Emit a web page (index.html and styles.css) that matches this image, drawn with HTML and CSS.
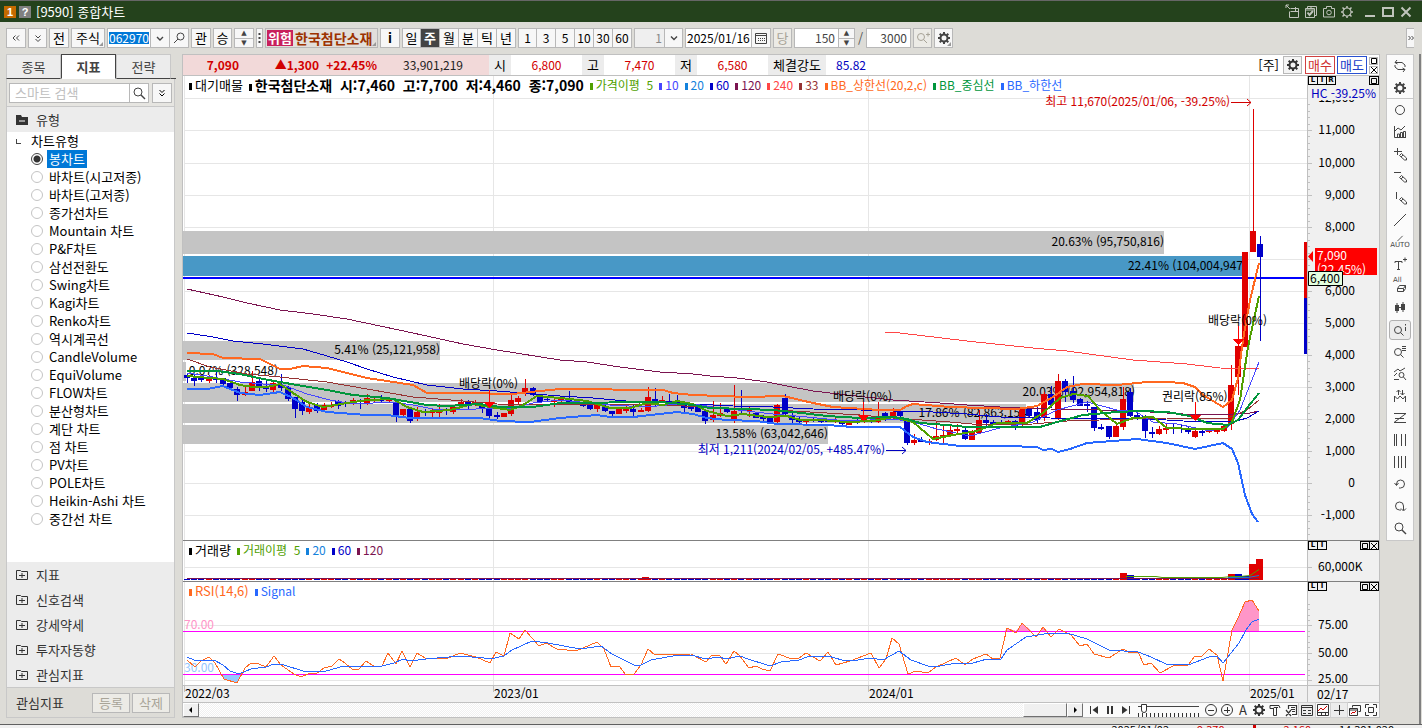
FILE: index.html
```html
<!DOCTYPE html>
<html lang="ko">
<head>
    <meta charset="UTF-8">
    <title>[9590] 종합차트</title>
    <link rel="stylesheet" href="styles.css">
</head>
<body>
<svg class="defs" aria-hidden="true">
    <symbol id="gear" viewBox="0 0 16 16">
        <circle cx="8" cy="8" r="3.5" fill="none" stroke="currentColor" stroke-width="2"/>
        <path d="M8 2v2M8 12v2M2 8h2M12 8h2M3.700 3.700l1.500 1.500M10.800 10.800l1.500 1.500M12.300 3.700l-1.500 1.500M5.200 10.800l-1.500 1.500" stroke="currentColor" stroke-width="2"/>
    </symbol>
    <symbol id="lens" viewBox="0 0 16 16">
        <circle cx="7" cy="7" r="4" fill="none" stroke="currentColor"/>
        <path d="M10 10l4 4" stroke="currentColor" stroke-width="1.4"/>
    </symbol>
    <symbol id="plusbox" viewBox="0 0 12 12">
        <path d="M.5 1.500h4l1 1h6v8H.5zM3 6.500h6M6 4v5" fill="none" stroke="currentColor"/>
    </symbol>
    <symbol id="pen" viewBox="0 0 16 16">
        <path d="M7.500 9.500l2-2 5 4.500v2h-2zM9 11l2-2" fill="none" stroke="currentColor"/>
    </symbol>
    <symbol id="square" viewBox="0 0 8 8">
        <path d="M1.500 1.500h5v5h-5z" fill="none" stroke="currentColor"/>
    </symbol>
    <symbol id="cross" viewBox="0 0 8 8">
        <path d="M1 1l6 6M7 1L1 7" stroke="currentColor"/>
    </symbol>
</svg>
<div class="app">
    <header class="titlebar">
        <span class="num">1</span>
        <span class="help">?</span>
        <h1>[9590] 종합차트</h1>
        <div class="win-tools">
            <button aria-label="분리"><svg viewBox="0 0 16 16"><path d="M5.500 4.500h8v9h-9v-6M5.500 7.500h8M10.500 3v4M1 4V1h3M1 1l4 4" fill="none" stroke="currentColor"/></svg></button>
            <button aria-label="복사"><svg viewBox="0 0 16 16"><path d="M4.500 4V2.500h9v9H12M2.500 4.500h9v9h-9zM8 2.500v2M2 6h10" fill="none" stroke="currentColor"/><path d="M4.500 8.500l2 2.500 3.500-4" fill="none" stroke="currentColor" stroke-width="2"/></svg></button>
            <button aria-label="캡처"><svg viewBox="0 0 16 16"><path d="M2.500 4.500h3v-2h5v2h3v8.500h-11z" fill="none" stroke="currentColor"/><circle cx="8" cy="8.500" r="2.300" fill="none" stroke="currentColor"/></svg></button>
            <button aria-label="설정"><svg viewBox="0 0 16 16"><circle cx="8" cy="8" r="4" fill="none" stroke="currentColor" stroke-width="1.200"/><path d="M8 2v2M8 12v2M2 8h2M12 8h2M3.500 3.500l2 2M10.500 10.500l2 2M12.500 3.500l-2 2M5.500 10.500l-2 2" stroke="currentColor" stroke-width="1.500"/></svg></button>
            <button aria-label="최소화" class="big"><svg viewBox="0 0 16 16"><path d="M3 12h10" stroke="currentColor" stroke-width="2"/></svg></button>
            <button aria-label="최대화"><svg viewBox="0 0 16 16"><path d="M3 4h10v8H3z" fill="none" stroke="currentColor" stroke-width="2"/></svg></button>
            <button aria-label="닫기"><svg viewBox="0 0 16 16"><path d="M3.500 3.500l9 9M12.500 3.500l-9 9" stroke="currentColor" stroke-width="2"/></svg></button>
        </div>
    </header>

    <div class="toolbar">
        <button class="btn w20" aria-label="접기"><svg viewBox="0 0 16 16"><path d="M7.500 5.500L5 8l2.500 2.500M11 5.500L8.500 8l2.500 2.500" fill="none" stroke="currentColor"/></svg></button>
        <button class="btn w19" aria-label="펼치기"><svg viewBox="0 0 16 16"><path d="M5.500 5.500L8 8l2.500-2.500M5.500 9L8 11.500 10.500 9" fill="none" stroke="currentColor"/></svg></button>
        <button class="btn w20">전</button>
        <button class="btn w34 corner">주식</button>
        <div class="field code">
            <input type="text" value="062970" aria-label="종목코드">
            <button aria-label="목록"><svg viewBox="0 0 16 16"><path d="M5 7l3 3 3-3" fill="none" stroke="currentColor" stroke-width="1.400"/></svg></button>
            <button aria-label="검색"><svg viewBox="0 0 16 16"><circle cx="9.500" cy="6.500" r="3.500" fill="none" stroke="currentColor"/><path d="M7 9l-4 4" stroke="currentColor"/></svg></button>
        </div>
        <button class="btn w20">관</button>
        <button class="btn w19">승</button>
        <div class="spin w20"><button aria-label="위">▲</button><button aria-label="아래">▼</button></div>
        <button class="btn dots" aria-label="더보기"><svg viewBox="0 0 7 16"><path d="M2.500 3h2v2h-2zM2.500 7h2v2h-2zM2.500 11h2v2h-2z" fill="currentColor"/></svg></button>
        <button class="btn stock corner"><b>위험</b><strong>한국첨단소재</strong></button>
        <button class="btn w20 bold">i</button>
        <div class="group">
            <button>일</button><button class="on">주</button><button>월</button><button>분</button><button>틱</button><button>년</button>
        </div>
        <div class="group mins">
            <button>1</button><button>3</button><button>5</button><button>10</button><button>30</button><button>60</button>
        </div>
        <div class="unit">
            <select aria-label="주기" disabled><option>1</option></select>
            <svg viewBox="0 0 16 16"><path d="M5 6.500l3 3 3-3" fill="none" stroke="currentColor" stroke-width="1.400"/></svg>
        </div>
        <div class="field date">
            <input type="text" value="2025/01/16" aria-label="날짜">
            <button aria-label="달력"><svg viewBox="0 0 16 16"><path d="M2.500 3.500h11v10h-11zM2.500 5.500h11" fill="none" stroke="currentColor"/><path d="M5 8.500h7M5 10.500h7" stroke="currentColor" stroke-dasharray="1 1"/></svg></button>
        </div>
        <button class="btn w19 off" disabled>당</button>
        <div class="field count">
            <input type="text" value="150" aria-label="봉 개수">
            <div class="spin"><button aria-label="증가">▲</button><button aria-label="감소">▼</button></div>
        </div>
        <span class="slash">/</span>
        <div class="field total"><input type="text" value="3000" aria-label="전체 개수"></div>
        <button class="btn w19 off" disabled aria-label="확대"><svg viewBox="0 0 16 16"><circle cx="6" cy="7" r="3.500" fill="none" stroke="currentColor"/><path d="M8.500 9.500l3.500 3.500M11 4.500h4M13 2.500v4" stroke="currentColor"/></svg></button>
        <button class="btn w19 corner" aria-label="설정"><svg><use href="#gear"/></svg></button>
        <button class="btn more" aria-label="더보기"><svg viewBox="0 0 8 16"><path d="M1.500 6L3.500 8l-2 2M4.500 6l2 2-2 2" fill="none" stroke="currentColor"/></svg></button>
    </div>

    <div class="work">
        <aside class="side">
            <nav class="tabs">
                <button>종목</button><button class="on">지표</button><button>전략</button>
            </nav>
            <div class="panel">
                <div class="search">
                    <div class="box">
                        <input type="text" placeholder="스마트 검색" aria-label="스마트 검색">
                        <button aria-label="찾기"><svg><use href="#lens"/></svg></button>
                    </div>
                    <button class="fold" aria-label="펼치기"><svg viewBox="0 0 16 16"><path d="M5.500 5L8 7.500 10.500 5M5.500 8.500L8 11l2.500-2.500" fill="none" stroke="currentColor"/></svg></button>
                </div>
                <div class="head"><svg viewBox="0 0 12 12"><path d="M0 1h5l1 2h6v8H0z" fill="#333"/><path d="M3 7h6" stroke="#fff"/></svg>유형</div>
                <div class="tree">
                    <div class="root"><i></i>차트유형</div>
                    <label><input type="radio" name="type" checked><span>봉차트</span></label>
                    <label><input type="radio" name="type"><span>바차트(시고저종)</span></label>
                    <label><input type="radio" name="type"><span>바차트(고저종)</span></label>
                    <label><input type="radio" name="type"><span>종가선차트</span></label>
                    <label><input type="radio" name="type"><span>Mountain 차트</span></label>
                    <label><input type="radio" name="type"><span>P&amp;F차트</span></label>
                    <label><input type="radio" name="type"><span>삼선전환도</span></label>
                    <label><input type="radio" name="type"><span>Swing차트</span></label>
                    <label><input type="radio" name="type"><span>Kagi차트</span></label>
                    <label><input type="radio" name="type"><span>Renko차트</span></label>
                    <label><input type="radio" name="type"><span>역시계곡선</span></label>
                    <label><input type="radio" name="type"><span>CandleVolume</span></label>
                    <label><input type="radio" name="type"><span>EquiVolume</span></label>
                    <label><input type="radio" name="type"><span>FLOW차트</span></label>
                    <label><input type="radio" name="type"><span>분산형차트</span></label>
                    <label><input type="radio" name="type"><span>계단 차트</span></label>
                    <label><input type="radio" name="type"><span>점 차트</span></label>
                    <label><input type="radio" name="type"><span>PV차트</span></label>
                    <label><input type="radio" name="type"><span>POLE차트</span></label>
                    <label><input type="radio" name="type"><span>Heikin-Ashi 차트</span></label>
                    <label><input type="radio" name="type"><span>중간선 차트</span></label>
                </div>
                <div class="head"><svg><use href="#plusbox"/></svg>지표</div>
                <div class="head"><svg><use href="#plusbox"/></svg>신호검색</div>
                <div class="head"><svg><use href="#plusbox"/></svg>강세약세</div>
                <div class="head"><svg><use href="#plusbox"/></svg>투자자동향</div>
                <div class="head"><svg><use href="#plusbox"/></svg>관심지표</div>
                <div class="foot"><span>관심지표</span><button disabled>등록</button><button disabled>삭제</button></div>
            </div>
        </aside>

        <main class="chart">
            <div class="quote">
                <div class="pink">
                    <strong class="price">7,090</strong>
                    <strong>▲1,300</strong>
                    <strong>+22.45%</strong>
                    <span class="vol">33,901,219</span>
                </div>
                <span class="tag">시</span><span class="val">6,800</span>
                <span class="tag">고</span><span class="val">7,470</span>
                <span class="tag">저</span><span class="val">6,580</span>
                <span class="tag wide">체결강도</span><span class="power">85.82</span>
                <span class="period">[주]</span>
                <button class="set" aria-label="설정"><svg><use href="#gear"/></svg></button>
                <button class="buy">매수</button>
                <button class="sell">매도</button>
                <div class="mini"><button aria-label="확대"><svg><use href="#square"/></svg></button><button aria-label="닫기"><svg><use href="#cross"/></svg></button></div>
            </div>

            <section class="pane price-pane">
                <svg class="plot" id="price" viewBox="183 76 1124 464">
                    <g id="grid"></g>
                    <g fill="#c4c4c4">
                        <path d="M183 231h981v23H183zM183 341h257v19H183zM183 362h3v19h-3zM183 383h951v19H183zM183 404h843v19H183zM183 425h645v19H183z"/>
                        <path d="M183 256h1060v20H183z" fill="#4898c6"/>
                    </g>
                    <path d="M183 278h1124" stroke="#0000ff" stroke-width="2"/>
                    <g class="label" text-anchor="end">
                        <text x="1164" y="246">20.63% (95,750,816)</text>
                        <text x="1243" y="270">22.41% (104,004,947</text>
                        <text x="440" y="354">5.41% (25,121,958)</text>
                        <text x="278" y="375">0.07% (328,548)</text>
                        <text x="1135" y="396">20.03% (92,954,818)</text>
                        <text x="1031" y="417">17.86% (82,863,154)</text>
                        <text x="828" y="438">13.58% (63,042,646)</text>
                    </g>
                    <g id="candles"></g>
                    <g id="averages" shape-rendering="crispEdges"></g>
                    <g class="label">
                        <text x="459" y="388">배당락(0%)</text>
                        <text x="833" y="401">배당락(0%)</text>
                        <text x="1162" y="401">권리락(85%)</text>
                        <text x="1208" y="325">배당락(0%)</text>
                        <text x="1230" y="106" fill="#d20000" text-anchor="end">최고 11,670(2025/01/06, -39.25%)</text>
                        <text x="885" y="454" fill="#0000c0" text-anchor="end">최저 1,211(2024/02/05, +485.47%)</text>
                    </g>
                    <path d="M1231 102.500h20M1247 99l4 3.500-4 3.500" fill="none" stroke="#d20000"/>
                    <path d="M886 450.500h20M902 447l4 3.500-4 3.500" fill="none" stroke="#0000c0"/>
                    <g fill="#f00" stroke="#f00">
                        <path d="M489.500 390v14M484.500 402.500h10l-5 5z"/>
                        <path d="M863.500 402v14M858.500 415.500h10l-5 5z"/>
                        <path d="M1195.500 402v14M1190.500 415.500h10l-5 5z"/>
                        <path d="M1238.500 326v14M1233.500 339.500h10l-5 5z"/>
                    </g>
                    <path d="M1304 242h3v56h-3z" fill="#e00000"/>
                    <path d="M1304 298h3v56h-3z" fill="#0000c8"/>
                </svg>
                <svg class="axis" viewBox="1308 76 71 464">
                    <g id="ticks"></g>
                    <g class="label" text-anchor="end" id="prices"></g>
                    <path d="M1308 86h71v14h-71z" fill="#f0f0f0"/>
                    <text class="label" x="1311" y="98" fill="#0000c0">HC -39.25%</text>
                    <path d="M1315 248h62v27h-62zM1313 251v11l-5-5.500z" fill="#f00"/>
                    <text class="label" x="1317" y="260" fill="#fff">7,090</text>
                    <text class="label" x="1317" y="274" fill="#fff">(22.45%)</text>
                    <path d="M1308.500 271.500h34v14h-34z" fill="#e4ffe0" stroke="#000"/>
                    <text class="label" x="1310" y="283">6,400</text>
                </svg>
                <div class="legend">
                    <span>대기매물</span>
                    <b>한국첨단소재&nbsp; 시:7,460&nbsp; 고:7,700&nbsp; 저:4,460&nbsp; 종:7,090</b>
                    <span class="c5">가격이평&nbsp; 5</span>
                    <span class="c10">10</span>
                    <span class="c20">20</span>
                    <span class="c60">60</span>
                    <span class="c120">120</span>
                    <span class="c240">240</span>
                    <span class="c33">33</span>
                    <span class="up">BB_상한선(20,2,c)</span>
                    <span class="mid">BB_중심선</span>
                    <span class="low">BB_하한선</span>
                </div>
                <div class="knobs"><button>L</button><button>I</button><button>R</button><button class="last" aria-label="확대"><svg><use href="#square"/></svg></button></div>
            </section>

            <section class="pane volume-pane">
                <svg class="plot" viewBox="183 541 1124 40">
                    <path d="M184 567.500h1123M184.500 541v40M493.500 541v40M868.500 541v40M1249.500 541v40" stroke="#e6e6e6"/>
                    <g id="volumes"></g>
                    <path d="M187 578.500h1072" stroke="#7b1450"/>
                    <path d="M1126 576.500h30l6 1h60l10-1h8l10-1 9-6" fill="none" stroke="#50a000"/>
                    <path d="M1228 577.500h20l11-2" fill="none" stroke="#1478d2"/>
                </svg>
                <svg class="axis" viewBox="1308 541 71 40">
                    <path d="M1308 567.500h4" stroke="#c0c0c0"/>
                    <text class="label" x="1318" y="571">60,000K</text>
                </svg>
                <div class="legend">
                    <span>거래량</span>
                    <span class="c5">거래이평&nbsp; 5</span>
                    <span class="c20">20</span>
                    <span class="c60">60</span>
                    <span class="c120">120</span>
                </div>
                <div class="knobs"><button>L</button><button>I</button><button class="last" aria-label="확대"><svg><use href="#square"/></svg></button><button aria-label="닫기"><svg><use href="#cross"/></svg></button></div>
            </section>

            <section class="pane rsi-pane">
                <svg class="plot" id="rsi" viewBox="183 582 1124 103" shape-rendering="crispEdges">
                    <path d="M184 625.500h1123M184 653.500h1123M184 680.500h1123M184.500 582v103M493.500 582v103M868.500 582v103M1249.500 582v103" stroke="#e6e6e6"/>
                    <text class="label" x="184" y="629" fill="#ff96c8">70.00</text>
                    <text class="label" x="184" y="672" fill="#96c8ff">30.00</text>
                    <path d="M1005 631l2-3 9 3 6-8 10 8zM1040 631l3-4 4 4zM1231 631l7-13 7-16 7-2 7 11v20z" fill="#ff96c8"/>
                    <path d="M220 675l4 4 13 4 5-8z" fill="#96c8ff"/>
                    <path d="M183 631.500h1122M183 674.500h1122" stroke="#f0f"/>
                </svg>
                <svg class="axis" viewBox="1308 582 71 103">
                    <path d="M1308 625.500h4M1308 653.500h4M1308 680.500h4M1308 604.500h2M1308 609.500h2M1308 615.500h2M1308 620.500h2M1308 631.500h2M1308 636.500h2M1308 642.500h2M1308 647.500h2M1308 659.500h2M1308 664.500h2M1308 670.500h2M1308 675.500h2" stroke="#c0c0c0"/>
                    <text class="label" x="1318" y="629">75.00</text>
                    <text class="label" x="1318" y="657">50.00</text>
                    <text class="label" x="1318" y="683">25.00</text>
                </svg>
                <div class="legend">
                    <span class="up">RSI(14,6)</span>
                    <span class="low">Signal</span>
                </div>
                <div class="knobs"><button>L</button><button>I</button><button class="last" aria-label="확대"><svg><use href="#square"/></svg></button><button aria-label="닫기"><svg><use href="#cross"/></svg></button></div>
            </section>

            <div class="dates">
                <svg class="plot" viewBox="183 686 1124 16">
                    <path d="M184.500 686v6M493.500 686v6M868.500 686v6M1249.500 686v6" stroke="#c0c0c0"/>
                    <g class="label"><text x="185" y="698">2022/03</text><text x="494" y="698">2023/01</text><text x="869" y="698">2024/01</text><text x="1250" y="698">2025/01</text></g>
                </svg>
                <span>02/17</span>
            </div>

            <div class="scroll">
                <button class="arrow" aria-label="왼쪽"><svg viewBox="0 0 8 8"><path d="M5 1v6L2 4z"/></svg></button>
                <div class="track"><div class="thumb"></div></div>
                <button class="arrow" aria-label="오른쪽"><svg viewBox="0 0 8 8"><path d="M3 1v6l3-3z"/></svg></button>
                <div class="play">
                    <button aria-label="처음"><svg viewBox="0 0 16 16"><path d="M4.500 4v8" stroke="currentColor"/><path d="M12 4v8L6.500 8z" fill="currentColor"/></svg></button>
                    <button aria-label="정지"><svg viewBox="0 0 16 16"><path d="M6 4v8M10 4v8" stroke="currentColor" stroke-width="2"/></svg></button>
                    <button aria-label="마지막"><svg viewBox="0 0 16 16"><path d="M11.500 4v8" stroke="currentColor"/><path d="M4 4v8l5.500-4z" fill="currentColor"/></svg></button>
                </div>
                <input class="speed" type="range" min="0" max="12" value="0" aria-label="속도">
                <div class="icons">
                    <button aria-label="축소"><svg viewBox="0 0 16 16"><circle cx="8" cy="8" r="5.500" fill="none" stroke="currentColor"/><path d="M5 8.500h6" stroke="currentColor"/></svg></button>
                    <button aria-label="확대"><svg viewBox="0 0 16 16"><circle cx="8" cy="8" r="5.500" fill="none" stroke="currentColor"/><path d="M5 8.500h6M8.500 5v6" stroke="currentColor"/></svg></button>
                    <button>A</button>
                    <button aria-label="설정"><svg><use href="#gear"/></svg></button>
                    <button aria-label="도구"><svg viewBox="0 0 16 16"><path d="M3 3.500h9l1 2.500M3 3.500v3h3l1-1h4M6.500 6v7.500h3V6" fill="none" stroke="currentColor"/></svg></button>
                    <button aria-label="엑셀"><svg viewBox="0 0 16 16"><path d="M5.500 7V3.500h8v9H9M8 5.500h4M8 7.500h4M9 9.500h3M3 8l5 6M8 8l-5 6" fill="none" stroke="currentColor" stroke-width="1.200"/></svg></button>
                    <button aria-label="표" class="on"><svg viewBox="0 0 16 16"><path d="M2.500 3.500h11v10h-11zM2.500 5.500h11M4 8.500h3M4 11.500h3M9 8.500h3M9 11.500h3" fill="none" stroke="currentColor"/></svg></button>
                    <button aria-label="차트"><svg viewBox="0 0 16 16"><path d="M2.500 2.500h11v11h-11zM2.500 10.500h11M6.500 10.500v3M10.500 10.500v3" fill="none" stroke="currentColor"/><path d="M3 9l3-3 2 2 4-4" fill="none" stroke="#d20000"/></svg></button>
                    <button aria-label="십자선" class="on"><svg viewBox="0 0 16 16"><path d="M3 8.500h10M8.500 3v10" stroke="currentColor"/></svg></button>
                    <button aria-label="복제"><svg viewBox="0 0 16 16"><path d="M5.500 5.500v-2h8v6h-2M2.500 6.500h8v7h-8zM3 8h8" fill="none" stroke="currentColor"/><path d="M4 12l2-2 1 1 2-2" fill="none" stroke="#d20000"/></svg></button>
                    <button aria-label="전체화면"><svg viewBox="0 0 16 16"><path d="M2.500 6V2.500H6M10 2.500h3.500V6M13.500 10v3.500H10M6 13.500H2.500V10M5.500 5.500h5v5h-5z" fill="none" stroke="currentColor"/></svg></button>
                </div>
            </div>
        </main>

        <aside class="tools">
            <button aria-label="새로고침"><svg viewBox="0 0 16 16"><path d="M5 2L3 4.500 5.500 6M3 4.500h7l3 2.500v2M11 14l2-2.500-2.500-1.500M13 11.500H6L3 9V7" fill="none" stroke="currentColor"/></svg></button>
            <button aria-label="설정" class="line"><svg><use href="#gear"/></svg></button>
            <button aria-label="원"><svg viewBox="0 0 16 16"><circle cx="8" cy="8" r="4.500" fill="none" stroke="currentColor"/></svg></button>
            <button aria-label="지표"><svg viewBox="0 0 16 16"><path d="M2.500 2v11.500H14M3 7l3-3 3 2 4-4M5.500 13v-3h2v3M8.500 13V8.500h2V13M11.500 13V7.500h2V13" fill="none" stroke="currentColor"/></svg></button>
            <button aria-label="십자 그리기"><svg viewBox="0 0 16 16"><path d="M2 5.500h8M5.500 2v7" stroke="currentColor"/><use href="#pen"/></svg></button>
            <button aria-label="수평선"><svg viewBox="0 0 16 16"><path d="M2 4.500h7" stroke="currentColor"/><use href="#pen"/></svg></button>
            <button aria-label="수직선"><svg viewBox="0 0 16 16"><path d="M4.500 2v7" stroke="currentColor"/><use href="#pen"/></svg></button>
            <button aria-label="추세선"><svg viewBox="0 0 16 16"><path d="M2 14L14 2" stroke="currentColor"/></svg></button>
            <button aria-label="자동추세선" class="auto"><svg viewBox="0 0 16 8"><path d="M5 7l6-6" stroke="currentColor"/></svg>AUTO</button>
            <button aria-label="문자"><svg viewBox="0 0 16 16"><path d="M3 7V5.500h7V7M6.500 5.500v8M5 13.500h3M11 3.500h4M13 1.500v4" fill="none" stroke="currentColor"/></svg></button>
            <button class="all"><span>All</span><svg viewBox="0 0 16 16"><path d="M5.500 10.500l2-3h6v3l-2 3h-6zM5.500 10.500h6l2-3M11.500 10.500v3" fill="none" stroke="currentColor"/></svg></button>
            <button aria-label="캔들"><svg viewBox="0 0 16 16"><path d="M5 3v10M11 2v10" stroke="currentColor"/><path d="M3 5h4v6H3zM9 4h4v6H9zM7 7h2v1H7z" fill="currentColor"/></svg></button>
            <button aria-label="정보" class="on"><svg viewBox="0 0 16 16"><circle cx="6" cy="8" r="3.500" fill="none" stroke="currentColor"/><path d="M8.500 10.500l3 3M13.500 5v4M13.500 2v1.500" stroke="currentColor"/></svg></button>
            <button aria-label="목록"><svg viewBox="0 0 16 16"><circle cx="6" cy="8" r="3.500" fill="none" stroke="currentColor"/><path d="M8.500 10.500l3 3M10 2.500h4M10 4.500h4M10 6.500h4" stroke="currentColor"/></svg></button>
            <button aria-label="분석"><svg viewBox="0 0 16 16"><path d="M2 6l4-3 2 2 5-3M2 10l3-3M2 13.500h5" fill="none" stroke="currentColor"/><circle cx="9.500" cy="9" r="2.500" fill="none" stroke="currentColor"/><path d="M11.500 11l2.500 3" stroke="currentColor"/></svg></button>
            <button aria-label="비교"><svg viewBox="0 0 16 16"><path d="M2.500 14V8l3 3 2.500-3 3 3 2.500-3v6M6.500 7V2M4.500 4l2-2 2 2M10.500 2v5M8.500 5l2 2 2-2" fill="none" stroke="currentColor"/></svg></button>
            <button aria-label="지그재그"><svg viewBox="0 0 16 16"><path d="M2 3.500h12L2 12.500h12M3 8.500h9" fill="none" stroke="currentColor"/></svg></button>
            <button aria-label="피보나치"><svg viewBox="0 0 16 16"><path d="M2.500 2v12M4.500 2v12M9.500 2v12M13.500 2v12" stroke="currentColor"/></svg></button>
            <button aria-label="등간격"><svg viewBox="0 0 16 16"><path d="M2.500 2v12M6.500 2v12M9.500 2v12M13.500 2v12" stroke="currentColor"/></svg></button>
            <button aria-label="되돌리기"><svg viewBox="0 0 16 16"><path d="M4.500 9V8a4 4 0 1 1 4 4H7M2.500 7l2 2.500 2-2.500" fill="none" stroke="currentColor"/></svg></button>
            <button aria-label="다시하기"><svg viewBox="0 0 16 16"><path d="M9 12H7.500a4 4 0 1 1 4-4v4M9 10.500l2.500 2.500 2.500-2.500" fill="none" stroke="currentColor"/></svg></button>
            <button aria-label="돋보기"><svg><use href="#lens"/></svg></button>
        </aside>
    </div>
    <footer class="under"><span>2025/01/02</span><span class="red">9,370</span><i></i><span class="red">2,160</span><span>14,391,020</span></footer>
</div>
<script src="script.js"></script>
</body>
</html>
```
FILE: styles.css
```css
* {
    box-sizing: border-box;
    margin: 0;
    padding: 0;
}
body {
    background: #dddcd7;
    color: #000;
    font: 13px/18px "Noto Sans CJK KR", sans-serif;
}
button, input, select {
    font: inherit;
    color: inherit;
    border: 0;
    border-radius: 0;
    background: none;
    outline: none;
}
button {
    display: flex;
    align-items: center;
    justify-content: center;
}
svg {
    display: block;
    width: 16px;
    height: 16px;
    flex: none;
}
.defs {
    position: absolute;
    width: 0;
    height: 0;
}
.app {
    display: flex;
    flex-direction: column;
    height: 100vh;
    min-height: 728px;
    overflow: hidden;
}

/* title */
.titlebar {
    display: flex;
    align-items: center;
    height: 22px;
    flex: none;
    padding: 0 8px 0 4px;
    background: #24421c;
    border-top: 1px solid #666;
    color: #fff;
}
.titlebar h1 {
    font-size: 13px;
    font-weight: normal;
    margin-left: 5px;
}
.num, .help {
    width: 12px;
    height: 12px;
    margin-right: 3px;
    background: #c46a00;
    font: bold 11px/12px "Liberation Sans", sans-serif;
    text-align: center;
}
.help {
    background: #808080;
    margin-right: 0;
}
.win-tools {
    display: flex;
    gap: 2px;
    margin-left: auto;
    color: #c0c4bc;
}
.win-tools .big {
    margin-left: 5px;
}

/* toolbar */
.toolbar {
    display: flex;
    align-items: center;
    gap: 2px;
    height: 32px;
    flex: none;
    padding: 0 5px 0 6px;
    border-right: 3px solid #dddcd7;
}
.btn {
    position: relative;
    height: 20px;
    flex: none;
    border: 1px solid #b8b8b8;
    background: #f7f7f7;
}
.btn svg { color: #444; }
.w19 { width: 19px; }
.w20 { width: 20px; }
.w34 { width: 34px; }
.bold { font-weight: bold; }
.off, .off svg {
    color: #a8a498;
    background: #ecebe6;
}
.corner::after {
    content: "";
    position: absolute;
    right: 1px;
    bottom: 1px;
    border: 2px solid #999;
    border-top-color: transparent;
    border-left-color: transparent;
}
.field {
    display: flex;
    height: 20px;
    flex: none;
    border: 1px solid #b8b8b8;
    background: #fff;
    font-size: 12px;
}
.field input {
    flex: 1;
    min-width: 0;
    padding: 0 3px;
}
.field > button {
    width: 19px;
    border-left: 1px solid #b8b8b8;
    background: #f7f7f7;
    color: #444;
}
.code { width: 82px; }
.code input {
    padding: 0 1px;
    color: #fff;
    background: linear-gradient(#0078d7, #0078d7) 1px 3px / 40px 12px no-repeat;
}
.date { width: 86px; }
.date input { padding: 0 1px; }
.count { width: 61px; }
.total { width: 45px; }
.count input, .total input {
    color: #444;
    text-align: right;
}
.spin {
    display: flex;
    flex-direction: column;
    width: 16px;
    height: 20px;
    flex: none;
    border: 1px solid #b8b8b8;
}
.spin.w20 { width: 20px; }
.spin button {
    flex: 1;
    min-height: 0;
    overflow: hidden;
    background: #f7f7f7;
    color: #444;
    font: 7px/8px "DejaVu Sans", sans-serif;
}
.spin button + button { border-top: 1px solid #b8b8b8; }
.count .spin {
    height: 18px;
    border-width: 0 0 0 1px;
}
.dots {
    width: 7px;
}
.dots svg { width: 7px; }
.stock {
    width: 113px;
    justify-content: flex-start;
    padding: 0 1px;
    background: #e2dfdb;
    color: #9c3200;
}
.stock b {
    width: 26px;
    height: 16px;
    margin-right: 2px;
    background: #c8205c;
    color: #fff;
    line-height: 15px;
}
.stock strong { font-size: 14px; }
.group {
    display: flex;
    height: 20px;
    flex: none;
    border: 1px solid #b8b8b8;
}
.mins { font-size: 12px; }
.group button {
    width: 19px;
    background: #f7f7f7;
    border-right: 1px solid #b8b8b8;
}
.group button:first-child { width: 18px; }
.group button:last-child {
    width: 18px;
    border-right: 0;
}
.group .on {
    background: #444;
    color: #fff;
    font-weight: bold;
}
.unit {
    position: relative;
    width: 49px;
    height: 20px;
    flex: none;
    font-size: 12px;
}
.unit select {
    appearance: none;
    width: 100%;
    height: 20px;
    padding-right: 20px;
    border: 1px solid #b8b8b8;
    background: linear-gradient(to right, #efefef 29px, #b8b8b8 29px, #b8b8b8 30px, #f7f7f7 30px);
    color: #888;
    opacity: 1;
    text-align-last: right;
}
.unit svg {
    position: absolute;
    right: 1px;
    top: 2px;
    color: #444;
}
.slash {
    width: 7px;
    text-align: center;
    color: #555;
}
.more {
    width: 8px;
    margin-left: auto;
    border-right: 0;
}
.more svg { width: 8px; }

/* work area */
.work {
    display: flex;
    flex: 1;
    min-height: 0;
    gap: 6px;
    padding: 0 5px 6px 6px;
    border-right: 2px solid #808080;
    margin-right: 1px;
}
.side {
    display: flex;
    flex-direction: column;
    width: 170px;
    flex: none;
}
.tabs {
    display: flex;
    height: 25px;
    flex: none;
    border-bottom: 1px solid #444;
}
.tabs button {
    width: 55px;
    height: 25px;
    border: 1px solid #c8c8c8;
    border-bottom-color: #444;
    background: #ececec;
    color: #444;
}
.tabs .on {
    border-color: #444;
    border-bottom-color: #fff;
    background: #fff;
    font-weight: bold;
}
.panel {
    display: flex;
    flex: 1;
    flex-direction: column;
    min-height: 0;
    border: 1px solid #c8c8c8;
    border-top: 0;
    margin-right: 1px;
    background: #fff;
}
.search {
    display: flex;
    gap: 3px;
    height: 28px;
    flex: none;
    padding: 4px 2px;
    background: #e6e5e1;
    border-bottom: 1px solid #c8c8c8;
}
.box {
    display: flex;
    flex: 1;
    min-width: 0;
    height: 20px;
    border: 1px solid #b8b8b8;
    background: #fff;
}
.box input {
    flex: 1;
    min-width: 0;
    padding-left: 5px;
}
.box input::placeholder { color: #c0c0c0; }
.box button {
    width: 19px;
    flex: none;
    border-left: 1px solid #b8b8b8;
    color: #444;
}
.fold {
    width: 20px;
    height: 20px;
    flex: none;
    border: 1px solid #b8b8b8;
    background: #f7f7f7;
}
.head {
    display: flex;
    align-items: center;
    height: 25px;
    flex: none;
    padding-left: 9px;
    background: #ececec;
    color: #333;
}
.head svg {
    width: 12px;
    height: 12px;
    margin-right: 8px;
}
.tree {
    flex: 1;
    min-height: 0;
    overflow: hidden;
}
.tree label, .root {
    display: flex;
    align-items: center;
    height: 18px;
    padding-left: 24px;
    white-space: nowrap;
}
.root { padding-left: 9px; }
.root i {
    width: 5px;
    height: 5px;
    margin-right: 10px;
    border: 1px solid #444;
    border-width: 0 0 1px 1px;
}
.tree input {
    appearance: none;
    width: 12px;
    height: 12px;
    margin-right: 4px;
    border: 1px solid #c4c4c4;
    border-radius: 50%;
    background: #fff;
}
.tree input:checked {
    border-color: #444;
    background: radial-gradient(#333 3px, #fff 4px);
}
.tree span { padding: 0 2px; }
.tree input:checked + span {
    background: #0078d7;
    color: #fff;
}
.foot {
    display: flex;
    align-items: center;
    gap: 2px;
    height: 30px;
    flex: none;
    padding: 0 4px 0 9px;
    border-top: 1px solid #c8c8c8;
    background: #dddcd7;
    color: #333;
}
.foot span { flex: 1; }
.foot button {
    width: 38px;
    height: 20px;
    border: 1px solid #b8b8b8;
    background: #ecebe6;
    color: #a8a498;
}

/* chart */
.chart {
    display: flex;
    flex: 1;
    flex-direction: column;
    min-width: 0;
    border: 1px solid #c0c0c0;
    background: #fff;
}
.quote {
    display: flex;
    align-items: center;
    height: 21px;
    flex: none;
    border-bottom: 1px solid #c0c0c0;
    white-space: nowrap;
}
.quote > span { line-height: 20px; }
.pink {
    display: grid;
    grid-template-columns: 76px 60px 58px 112px;
    background: #f2d9d9;
    color: #d20000;
    font-size: 12px;
    line-height: 20px;
    text-align: center;
}
.pink strong { text-align: right; }
.pink .price { padding-right: 20px; }
.pink .vol { color: #222; }
.tag {
    width: 22px;
    background: #ececec;
    text-align: center;
}
.tag.wide { width: 58px; }
.val {
    width: 71px;
    color: #d20000;
    font-size: 12px;
    text-align: center;
}
.power {
    width: 50px;
    color: #0000c0;
    font-size: 12px;
    text-align: center;
}
.period {
    margin-left: auto;
    margin-right: 4px;
}
.set, .buy, .sell {
    height: 18px;
    border: 1px solid #b8b8b8;
}
.set {
    width: 19px;
    margin-right: 3px;
    background: #f4f4f4;
    color: #333;
}
.buy, .sell {
    width: 30px;
    margin-right: 2px;
    border-color: #d04040;
    color: #d03030;
}
.sell {
    border-color: #2850d0;
    color: #2040c8;
}
.mini {
    display: flex;
    flex-direction: column;
    gap: 1px;
    width: 9px;
    margin-right: 1px;
}
.mini button {
    height: 8px;
    border: 1px solid #b8b8b8;
}
.mini svg {
    width: 8px;
    height: 8px;
}
.pane {
    position: relative;
    display: flex;
    flex: none;
    border-top: 1px solid #808080;
}
.price-pane {
    height: 464px;
    border-top: 0;
}
.volume-pane { height: 41px; }
.rsi-pane { height: 104px; }
.plot {
    flex: 1;
    min-width: 0;
    height: 100%;
}
.axis {
    width: 72px;
    height: 100%;
    border-left: 1px solid #c0c0c0;
    background: #f0f0f0;
}
.label { font-size: 12px; }
.legend {
    position: absolute;
    left: 6px;
    top: 0;
    display: flex;
    gap: 6px;
    font-size: 12px;
    white-space: nowrap;
}
.legend > *::before {
    content: "";
    display: inline-block;
    width: 3px;
    height: 7px;
    margin-right: 3px;
    background: currentColor;
}
.legend span:first-child { font-size: 13px; }
.legend b { font-size: 14px; }
.c5 { color: #50a000; }
.c10 { color: #4646ff; }
.c20 { color: #1482dc; }
.c60 { color: #0000c8; }
.c120 { color: #7b1450; }
.c240 { color: #ff4646; }
.c33 { color: #963232; }
.up { color: #ff6820; }
.mid { color: #00963c; }
.low { color: #2868ff; }
.knobs {
    position: absolute;
    right: 1px;
    top: 0;
    display: flex;
    width: 70px;
}
.knobs button {
    width: 10px;
    height: 9px;
    margin-right: -1px;
    border: 1px solid #000;
    background: #f0f0f0;
    font: bold 7px/7px "DejaVu Sans", sans-serif;
}
.knobs .last { margin-left: auto; }
.knobs svg {
    width: 8px;
    height: 8px;
}
.dates {
    display: flex;
    height: 17px;
    flex: none;
    border-top: 1px solid #c0c0c0;
    background: #f0f0f0;
    font-size: 12px;
}
.dates span {
    width: 72px;
    padding-left: 9px;
    border-left: 1px solid #c0c0c0;
    line-height: 16px;
}
.scroll {
    display: flex;
    align-items: center;
    flex: 1;
    min-height: 0;
    border-top: 1px solid #c0c0c0;
    background: #fafafa;
}
.arrow {
    width: 16px;
    height: 14px;
    flex: none;
    border: 1px solid #fff;
    border-right-color: #707070;
    border-bottom-color: #707070;
    background: #f0f0f0;
}
.arrow svg {
    width: 8px;
    height: 8px;
}
.track {
    display: flex;
    flex: 1;
    height: 14px;
    justify-content: flex-end;
    background: repeating-conic-gradient(#f0f0f0 0 25%, #fff 0 50%) 0 0 / 2px 2px;
}
.thumb {
    width: 44px;
    border: 1px solid #fff;
    border-right-color: #707070;
    border-bottom-color: #707070;
    background: #f0f0f0;
}
.play, .icons {
    display: flex;
    color: #333;
}
.play { padding: 0 4px 0 3px; }
.play button, .icons button {
    width: 16px;
    height: 14px;
}
.icons svg {
    width: 16px;
    height: 16px;
}
.icons .on {
    background: #ececec;
    box-shadow: 0 0 0 1px #d0d0d0;
}
.speed {
    appearance: none;
    width: 61px;
    height: 13px;
    margin-right: 4px;
    background:
        linear-gradient(#444, #444) 0 2px / 100% 1px no-repeat,
        repeating-linear-gradient(to right, #333 0 1px, transparent 1px 4px) 0 9px / 100% 4px no-repeat;
}
.speed::-webkit-slider-thumb {
    appearance: none;
    width: 6px;
    height: 9px;
    margin-top: -3px;
    margin-left: 3px;
    border: 1px solid #333;
    border-radius: 0 0 3px 3px;
    background: #fff;
}

/* drawing tools */
.tools {
    width: 28px;
    align-self: flex-start;
    flex: none;
    padding-bottom: 1px;
    border: 1px solid #c8c8c8;
    background: #fbfbfb;
    color: #444;
}
.tools button {
    width: 26px;
    height: 22px;
}
.tools .line { border-bottom: 1px solid #c8c8c8; }
.tools .on {
    width: 22px;
    height: 20px;
    margin: 1px 2px;
    border: 1px solid #b0b0b0;
    border-radius: 3px;
    background: #ececec;
}
.tools .auto {
    flex-direction: column;
    font: 7px/7px "DejaVu Sans", sans-serif;
}
.tools .auto svg { height: 7px; }
.all { position: relative; }
.all span {
    position: absolute;
    left: 6px;
    top: 1px;
    font: 7px/8px "DejaVu Sans", sans-serif;
}

/* top edge of the window below */
.under {
    display: flex;
    justify-content: flex-end;
    gap: 28px;
    height: 4px;
    flex: none;
    overflow: hidden;
    padding-right: 28px;
    border-top: 1px solid #606060;
    background: #f0f0f0;
    font-size: 11px;
    line-height: 9px;
}
.under i {
    width: 3px;
    background: #d20000;
}
.red { color: #d20000; }
```
FILE: script.js
```js
var NS = 'http://www.w3.org/2000/svg';

function $(id) {
    return document.getElementById(id);
}

function add(parent, tag, attrs, text) {
    var el = document.createElementNS(NS, tag);
    for (var k in attrs) {
        el.setAttribute(k, attrs[k]);
    }
    if (text) {
        el.textContent = text;
    }
    parent.appendChild(el);
}

// grid and price axis
var rows = [98, 130, 163, 195, 227, 259, 291, 323, 355, 387, 419, 451, 483, 515];
rows.forEach(function (y, i) {
    var price = 12000 - i * 1000;
    add($('grid'), 'path', {d: 'M184 ' + (y + 0.5) + 'h1123', stroke: '#e6e6e6'});
    add($('ticks'), 'path', {d: 'M1308 ' + (y + 0.5) + 'h4', stroke: '#c0c0c0'});
    for (var k = 1; k < 5; k++) {
        add($('ticks'), 'path', {d: 'M1308 ' + (Math.round(y + k * 6.4) + 0.5) + 'h2', stroke: '#c0c0c0'});
    }
    if (price !== 7000) {
        add($('prices'), 'text', {x: 1355, y: y + 4}, price.toLocaleString('en-US'));
    }
});
[184, 493, 868, 1249].forEach(function (x) {
    add($('grid'), 'path', {d: 'M' + (x + 0.5) + ' 76v464', stroke: '#e6e6e6'});
});

// r/b, body top, body bottom, high, low
var candles = 'b375,378,373,383 b378,381,375,386 b378,380,377,382 r377,381,375,383 b378,380,372,383 b378,384,378,385 b383,388,383,388 b389,395,387,401 r392,395,385,396 r382,391,371,391 ' +
    'b381,387,378,391 b387,389,381,392 r383,390,382,392 b385,388,374,391 b387,399,386,401 b397,409,397,418 b402,411,400,415 r408,412,403,414 b405,411,403,413 r405,410,403,411 ' +
    'r405,407,402,408 b401,406,400,409 b402,404,401,407 r400,403,398,405 b401,402,399,409 r398,403,394,405 r399,401,396,403 b399,401,395,402 r398,401,397,403 b402,416,402,422 ' +
    'r409,415,409,418 b409,421,408,423 r412,419,407,421 b411,413,409,416 r411,413,408,417 r410,413,404,417 b410,411,408,415 r407,412,406,414 r402,406,399,408 b402,404,400,409 ' +
    'r402,404,400,406 b405,409,404,413 b409,416,408,418 b415,417,412,419 r413,417,413,417 r400,414,395,416 r398,402,396,404 r388,394,379,396 b388,395,387,396 b397,402,396,403 ' +
    'b399,400,397,402 r400,402,398,407 r398,400,397,402 b398,402,391,403 b401,405,400,405 b403,406,402,407 b404,409,403,410 r404,409,402,412 b406,411,405,412 b411,414,411,417 ' +
    'r409,414,408,414 r408,411,406,413 b409,412,405,416 r410,412,408,412 r397,411,387,412 b399,402,388,407 r400,402,396,403 b401,402,394,404 b401,404,395,405 b403,408,402,412 ' +
    'b406,409,405,411 b407,412,406,412 b411,421,411,424 r415,420,401,422 r413,416,403,417 b409,412,407,413 r411,419,385,423 b409,411,390,413 r409,411,406,417 b413,418,412,418 ' +
    'b417,419,415,421 b418,423,417,423 r405,422,404,423 b398,414,394,415 b415,420,413,423 b420,422,416,424 r420,422,419,424 b419,421,417,422 b420,422,418,423 b420,422,419,422 ' +
    'r420,422,418,423 b422,424,420,425 r422,425,421,425 b420,422,418,424 r419,422,418,423 b420,422,418,423 r417,422,402,423 b413,420,412,421 r412,416,408,417 b412,416,411,418 ' +
    'b420,443,420,445 r440,443,434,445 b440,442,437,442 r441,442,439,445 r436,440,422,441 r435,438,425,443 r430,435,425,437 r429,431,424,434 b430,439,428,440 r431,440,430,440 ' +
    'r420,433,410,434 b420,423,414,427 b422,424,420,425 b422,423,420,424 r421,424,420,425 b421,428,420,430 r408,425,407,426 b408,416,406,417 b412,420,405,423 r394,418,392,421 ' +
    'b394,405,386,408 r381,419,374,420 b381,392,379,402 b391,400,376,403 b399,406,398,406 b404,406,401,412 b407,428,407,431 b427,429,424,430 b426,437,426,439 r426,437,424,437 ' +
    'r399,427,387,430 b392,416,388,417 b415,417,412,420 b416,431,415,438 b432,434,427,438 r429,434,426,435 r428,430,423,434 b428,429,423,434 b428,429,425,433 b429,432,426,434 ' +
    'r431,437,428,438 b431,433,430,436 r431,432,429,433 r430,432,428,434 r426,431,424,432 r385,424,365,430 r346,377,332,395 r252,347,252,347 r231,252,109,252 b244,257,236,341';

candles.split(' ').forEach(function (s, i) {
    var v = s.slice(1).split(',');
    var color = s[0] === 'r' ? '#e00000' : '#0000c8';
    var x = Math.round(187 + i * 7.2);
    add($('candles'), 'path', {d: 'M' + (x + 0.5) + ' ' + v[2] + 'V' + v[3], stroke: color});
    add($('candles'), 'rect', {x: x - 3, y: v[0], width: 6, height: v[1] - v[0], fill: color});
    add($('volumes'), 'rect', {x: x - 3, y: 579, width: 6, height: 1, fill: color});
});

// volume bars that rise over the base line
[[645, 577, 'r'], [1123, 573, 'r'], [1130, 575, 'b'], [1231, 574, 'r'], [1238, 574, 'b'], [1245, 576, 'b'], [1252, 564, 'r'], [1259, 559, 'r']].forEach(function (v) {
    add($('volumes'), 'rect', {x: v[0] - 3, y: v[1], width: 7, height: 580 - v[1], fill: v[2] === 'r' ? '#e00000' : '#0000c8'});
});

function line(parent, color, width, points) {
    add($(parent), 'polyline', {points: points, fill: 'none', stroke: color, 'stroke-width': width});
}

line('averages', '#7b1450', 1, '187,289 223,297 247,303 280,310 313,314 347,319 380,326 413,333 463,344 497,350 560,360 587,362 620,367 660,372 693,374 710,376 737,378 767,382 787,386 813,391 847,395 893,400 940,403 967,405 1000,407 1050,409 1100,410 1150,412 1183,414 1233,414 1250,413 1259,411');
line('averages', '#0000c8', 1, '187,333 213,337 233,341 263,344 303,349 327,356 347,362 367,369 393,377 427,385 463,389 497,391 560,396 593,398 637,402 693,404 733,406 773,407 813,409 860,410 893,411 933,412 967,414 1000,417 1050,418 1100,419 1133,418 1183,421 1233,422 1247,418 1259,411');
line('averages', '#963232', 1, '187,359 210,367 247,374 280,377 327,382 367,389 413,397 463,401 497,404 560,405 640,404 707,407 793,411 860,415 893,418 950,422 983,425 1033,424 1067,421 1100,420 1167,418 1228,418 1247,410 1259,400');
line('averages', '#ff4646', 1, '885,332 900,333 967,341 1033,348 1067,351 1133,360 1187,364 1220,368 1259,369');
line('averages', '#4646ff', 1, '187,373 213,377 240,382 263,384 283,385 307,394 330,400 353,404 393,402 413,405 433,409 463,410 490,408 510,409 533,403 560,400 610,405 647,407 687,403 720,408 773,414 807,417 847,421 893,419 913,422 937,429 970,436 1000,428 1033,422 1057,410 1087,402 1117,410 1133,410 1153,422 1177,424 1210,431 1228,427 1240,410 1259,362');
line('averages', '#50a000', 2, '187,376 210,378 223,379 240,385 253,387 267,387 280,384 293,393 307,402 323,407 347,403 367,400 393,399 407,407 423,412 450,410 473,404 490,407 510,410 523,405 537,396 560,398 587,401 610,408 630,408 647,403 663,405 677,401 693,404 707,411 727,416 743,414 767,417 787,416 800,420 820,420 847,422 873,421 893,417 913,422 933,439 953,435 977,431 997,423 1027,423 1043,413 1060,398 1073,394 1088,396 1100,410 1117,424 1133,418 1153,417 1167,428 1197,429 1223,429 1232,422 1240,400 1248,347 1259,296');
line('averages', '#00963c', 2, '187,371 217,371 240,374 263,379 297,385 327,390 353,395 387,398 427,405 447,406 480,404 500,407 533,407 560,403 660,402 693,405 710,408 747,409 773,410 793,412 827,416 860,418 893,417 907,419 920,423 947,425 967,427 1040,427 1057,422 1083,415 1117,412 1140,411 1167,412 1190,416 1207,423 1228,425 1238,420 1247,408 1259,393');
line('averages', '#ff6820', 2, '187,353 213,354 223,358 260,359 280,369 290,369 303,366 327,368 347,373 367,378 387,381 413,385 427,393 467,393 513,394 530,392 560,389 663,390 673,393 693,395 747,397 783,396 813,403 833,407 880,410 900,410 907,406 913,404 950,407 983,408 1017,409 1037,406 1053,397 1067,387 1083,384 1117,385 1147,382 1167,382 1183,383 1195,387 1203,395 1223,407 1232,400 1238,378 1243,340 1250,300 1259,263');
line('averages', '#2868ff', 2, '187,389 207,389 223,386 240,393 260,395 280,392 293,398 307,407 327,412 367,415 387,415 410,418 480,418 500,421 530,422 560,418 597,415 610,417 633,417 660,414 677,412 693,414 707,418 727,420 757,421 777,424 827,425 853,427 900,427 913,437 927,442 960,446 1007,446 1037,447 1043,450 1052,449 1058,452 1070,449 1087,443 1113,441 1137,439 1167,443 1195,449 1223,443 1232,449 1238,463 1245,495 1252,514 1258,522');

line('rsi', '#ff6820', 1, '187,660 195,667 201,661 209,657 215,663 224,679 237,683 245,668 251,663 259,664 266,667 274,656 281,665 294,674 301,677 310,673 316,674 324,668 332,666 339,659 345,663 353,670 359,669 366,661 375,667 382,666 388,653 396,664 402,651 410,667 417,653 425,658 446,659 460,653 476,657 490,663 496,652 504,656 510,633 519,639 525,630 539,646 546,643 557,649 576,651 597,642 604,649 611,667 619,666 626,675 634,674 641,665 648,649 655,655 691,654 706,662 712,655 719,655 726,664 734,651 740,656 749,668 756,666 762,669 770,671 778,654 792,659 799,658 806,653 820,661 828,652 836,665 850,661 871,653 879,668 886,659 892,638 899,644 908,674 916,671 928,673 936,667 956,658 965,665 973,659 986,654 993,659 1000,658 1007,628 1016,633 1022,623 1036,637 1043,627 1051,637 1059,629 1071,635 1080,646 1087,644 1094,654 1109,658 1123,649 1130,653 1138,652 1144,665 1151,663 1160,673 1173,666 1188,665 1195,656 1202,656 1209,649 1217,655 1223,681 1232,630 1238,618 1245,602 1252,600 1259,611');
line('rsi', '#2868ff', 1, '187,657 194,660 214,660 223,665 230,671 239,674 251,669 266,667 274,664 284,665 303,671 326,671 344,666 359,667 382,666 394,663 403,659 410,661 426,659 460,656 484,658 490,659 504,656 512,650 532,641 548,643 580,649 601,646 612,654 634,665 641,665 651,660 673,656 691,655 706,659 719,657 726,659 740,656 748,659 770,666 781,662 799,660 807,657 828,656 842,660 858,660 871,658 883,660 899,651 911,660 928,666 940,666 956,663 973,663 987,659 1001,659 1007,650 1026,637 1044,634 1067,633 1087,639 1109,650 1138,652 1151,657 1166,664 1188,665 1209,657 1217,656 1223,663 1239,643 1246,630 1252,622 1259,619');
```
